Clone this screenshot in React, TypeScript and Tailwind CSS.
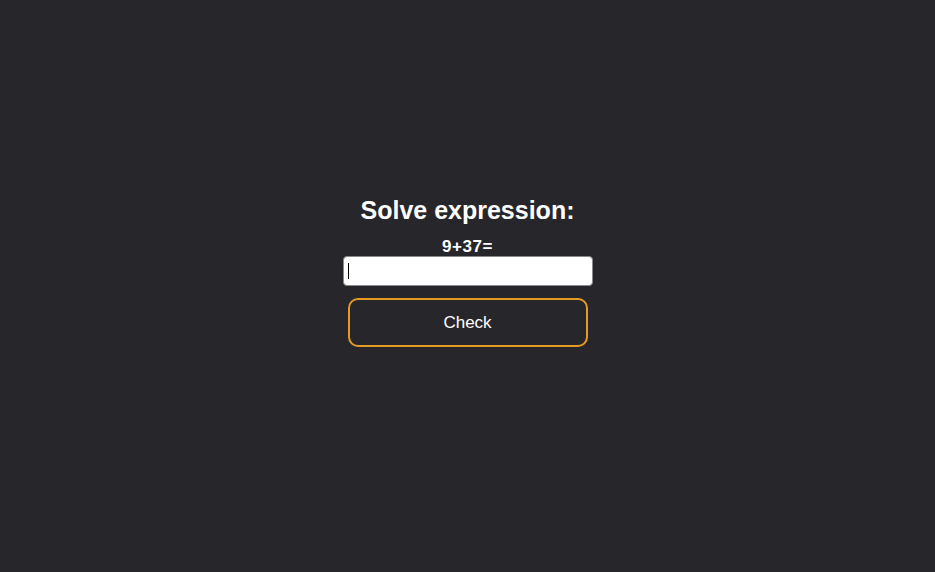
import React from 'react';

export default function App() {
  return (
    <div
      className="flex h-[572px] w-full flex-col items-center justify-center bg-[#27262b] pb-[30px] text-white"
      style={{ fontFamily: '"Liberation Sans", Arial, sans-serif' }}
    >
      <h1 className="text-[25px] font-bold leading-[30px]">Solve expression:</h1>
      <p className="mt-[14px] text-[17px] font-bold leading-[16px] tracking-[0.6px]">9+37=</p>
      <div className="relative mt-[1px]">
        <input
          type="text"
          className="h-[30px] w-[250px] rounded-[4px] border border-[#8a8a8a] bg-white px-[4px] text-[14px] text-black outline-none"
        />
        <span className="absolute left-[5px] top-[7px] h-[16px] w-px bg-black" />
      </div>
      <button className="mt-[12px] h-[49px] w-[240px] rounded-[10px] border-2 border-[#e49b22] bg-transparent text-[17px] text-white">
        Check
      </button>
    </div>
  );
}
